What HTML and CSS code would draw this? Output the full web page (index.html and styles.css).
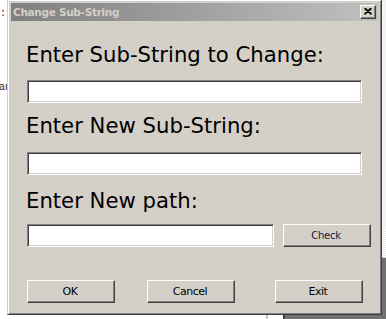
FILE: index.html
```html
<!DOCTYPE html>
<html>
<head>
<meta charset="utf-8">
<title>Change Sub-String</title>
<link rel="stylesheet" href="styles.css">
</head>
<body>
<div class="desktop">
  <div class="frag frag-top">:.</div>
  <div class="frag frag-an">an</div>
  <div class="bg-right"></div>
  <div class="bg-checker"></div>
  <div class="bg-dark"></div>
  <div class="bg-line"></div>
  <div class="window">
    <div class="titlebar">
      <span class="title">Change Sub-String</span>
      <span class="close">
        <svg width="8" height="7" viewBox="0 0 8 7"><path d="M0.5 0.5 L7.5 6.5 M1.5 0.5 L7.5 5.6 M7.5 0.5 L0.5 6.5 M6.5 0.5 L0.5 5.6" stroke="#000" stroke-width="1.2" fill="none"/></svg>
      </span>
    </div>
    <div class="content">
      <div class="label">Enter Sub-String to Change:</div>
      <div class="field wide f1"></div>
      <div class="label l2">Enter New Sub-String:</div>
      <div class="field wide f2"></div>
      <div class="label l3">Enter New path:</div>
      <div class="row3">
        <div class="field path"></div>
        <div class="btn small">Check</div>
      </div>
      <div class="buttons">
        <div class="btn">OK</div>
        <div class="btn cancel">Cancel</div>
        <div class="btn exit">Exit</div>
      </div>
    </div>
  </div>
</div>
</body>
</html>
```
FILE: styles.css
```css
html, body {
  margin: 0;
  padding: 0;
  background: #fff;
}
.desktop {
  position: relative;
  width: 386px;
  height: 319px;
  overflow: hidden;
  background: #fff;
  font-family: "DejaVu Sans", sans-serif;
}
.frag {
  position: absolute;
  font: 10px/12px "Liberation Mono", monospace;
  color: #1a1a40;
}
.frag-top { left: 0; top: 8px; }
.frag-an { left: -1px; top: 82px; color: #402010; }
.bg-right {
  position: absolute;
  left: 381px; top: 0;
  width: 5px; height: 230px;
  background: #f4f4f4;
}
.bg-checker {
  position: absolute;
  left: 381px; top: 230px;
  width: 5px; height: 26px;
  background: repeating-conic-gradient(#e6e6e6 0 25%, #ffffff 0 50%) 0 0 / 2px 2px;
}
.bg-dark {
  position: absolute;
  left: 283px; top: 257px;
  width: 103px; height: 62px;
  background: #717171;
  border-top: 1px solid #d0d0d0;
  border-left: 2px solid #404040;
}
.bg-line {
  position: absolute;
  left: 266px; top: 300px;
  width: 2px; height: 19px;
  background: #c8c8c8;
}
.window {
  position: absolute;
  left: 7px;
  top: -1px;
  width: 375px;
  height: 316px;
  box-sizing: border-box;
  background: #d4d0c8;
  border: 1px solid;
  border-color: #d4d0c8 #404040 #404040 #d4d0c8;
  box-shadow: inset 1px 1px #fff, inset -1px -1px #808080;
  padding: 3px;
}
.titlebar {
  height: 18px;
  display: flex;
  align-items: center;
  justify-content: space-between;
  background: linear-gradient(to right, #808080, #c0c0c0);
  padding: 0 2px 0 2px;
}
.title {
  font: bold 10.5px/18px "DejaVu Sans", sans-serif;
  letter-spacing: -0.3px;
  color: #d4d0c8;
}
.close {
  width: 16px;
  height: 14px;
  box-sizing: border-box;
  background: #d4d0c8;
  border: 1px solid;
  border-color: #fff #404040 #404040 #fff;
  box-shadow: inset -1px -1px #808080;
  display: flex;
  align-items: center;
  justify-content: center;
  padding: 0 1px 1px 0;
}
.close svg { display: block; }
.content {
  padding: 22px 0 0 16px;
}
.label {
  font-size: 21.2px;
  line-height: 24px;
  color: #000;
  margin-left: -1px;
  white-space: nowrap;
}
.field {
  height: 23px;
  box-sizing: border-box;
  background: #fff;
  border: 1px solid;
  border-color: #808080 #fff #fff #808080;
  box-shadow: inset 1px 1px #404040, inset -1px -1px #d4d0c8;
}
.wide { width: 335px; }
.f1 { margin-top: 13px; }
.l2 { margin-top: 11px; }
.f2 { margin-top: 14px; }
.l3 { margin-top: 14px; }
.row3 {
  margin-top: 11px;
  display: flex;
  gap: 9px;
}
.path { width: 247px; }
.btn {
  width: 88px;
  height: 23px;
  box-sizing: border-box;
  background: #d4d0c8;
  border: 1px solid;
  border-color: #fff #404040 #404040 #fff;
  box-shadow: inset -1px -1px #808080;
  display: flex;
  align-items: center;
  justify-content: center;
  padding: 0 2px 1px 0;
  font-size: 11px;
  letter-spacing: -0.5px;
  color: #000;
}
.btn.small {
  font-size: 10px;
  letter-spacing: -0.3px;
  color: #102040;
}
.buttons {
  margin-top: 33px;
  display: flex;
}
.cancel { margin-left: 32px; }
.exit { margin-left: 40px; }
```
